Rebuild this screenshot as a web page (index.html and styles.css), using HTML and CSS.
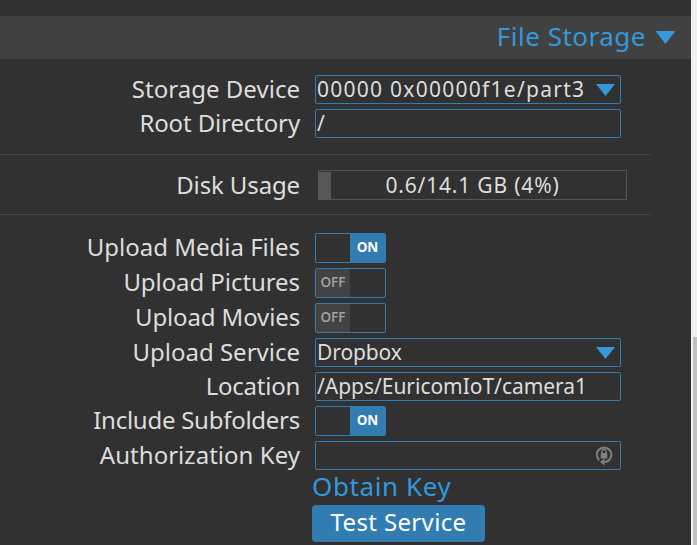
FILE: index.html
```html
<!DOCTYPE html>
<html lang="en">
<head>
<meta charset="utf-8">
<title>Settings</title>
<link rel="stylesheet" href="styles.css">
</head>
<body>
<div class="app">
  <main class="settings">
    <header class="section-title"><span>File Storage</span><svg class="arrow" width="21" height="13" viewBox="0 0 21 13"><path d="M.5 0h20L10.500 13z"/></svg></header>
    <section class="group storage">
      <div class="row"><label class="sp0">Storage Device</label><div class="field"><span class="v-device">00000 0x00000f1e/part3</span><svg class="caret" width="19" height="12" viewBox="0 0 19 12"><path d="M0 0h19L9.500 12z"/></svg></div></div>
      <div class="row"><label class="sp2">Root Directory</label><div class="field"><span>/</span></div></div>
    </section>
    <section class="group usage">
      <div class="row"><label class="sp2">Disk Usage</label><div class="progress"><div class="bar"></div><span>0.6/14.1 GB (4%)</span></div></div>
    </section>
    <section class="group upload">
      <div class="row"><label>Upload Media Files</label><div class="toggle on"><span>ON</span></div></div>
      <div class="row"><label class="sp1">Upload Pictures</label><div class="toggle"><span>OFF</span></div></div>
      <div class="row"><label class="sp2">Upload Movies</label><div class="toggle"><span>OFF</span></div></div>
      <div class="row"><label>Upload Service</label><div class="field"><span class="v-service">Dropbox</span><svg class="caret" width="19" height="12" viewBox="0 0 19 12"><path d="M0 0h19L9.500 12z"/></svg></div></div>
      <div class="row"><label class="sp3">Location</label><div class="field"><span class="v-location">/Apps/EuricomIoT/camera1</span></div></div>
      <div class="row"><label class="sp3">Include Subfolders</label><div class="toggle on"><span>ON</span></div></div>
      <div class="row"><label class="sp0">Authorization Key</label><div class="field">
        <svg class="key-icon" width="18" height="21" viewBox="0 0 18 21"><path class="ring" d="M4.200 15.200A7.300 7.300 0 1 1 14 15.200Q12.500 16.800 9.500 17"/><path d="M9.500 13.500v7L5 17zM5.800 8h6.500v5.500H5.800z"/><path class="shackle" d="M7 8.500V6.500a2 2 0 0 1 4 0v2"/></svg>
      </div></div>
    </section>
    <div class="actions">
      <a class="obtain">Obtain Key</a>
      <div class="button">Test Service</div>
    </div>
  </main>
  <aside class="scrollbar"><div class="thumb"></div></aside>
</div>
</body>
</html>
```
FILE: styles.css
```css
* { box-sizing: border-box; }
body {
  margin: 0;
  background: #313131;
  color: #dddddd;
  font-family: "Noto Sans", sans-serif;
  overflow: hidden;
}
.app { display: flex; height: 545px; }
.settings { width: 691px; padding-top: 16px; }
.section-title {
  display: flex;
  align-items: center;
  justify-content: flex-end;
  gap: 9px;
  height: 43px;
  padding-right: 15px;
  background: #414141;
  color: #3498db;
  font-size: 26px;
  letter-spacing: 0.5px;
  line-height: 43px;
}
.section-title span { padding-bottom: 2px; }
svg { flex: none; fill: #3498db; }
.group {
  display: grid;
  gap: 5px;
  width: 651px;
}
.storage { padding: 16px 0; border-bottom: 1px solid #434343; }
.usage { padding: 15px 0 14px; border-bottom: 1px solid #434343; }
.upload { padding-top: 18px; }
.row {
  display: grid;
  grid-template-columns: 300px 1fr;
  column-gap: 15px;
  align-items: center;
}
label {
  height: 28px;
  margin-top: -2px;
  font-size: 24px;
  line-height: 28px;
  text-align: right;
  white-space: nowrap;
}
.usage label { margin-top: 0; }
.sp0 { letter-spacing: 0.03px; }
.sp1 { letter-spacing: -0.07px; }
.sp2 { letter-spacing: -0.13px; }
.sp3 { letter-spacing: -0.26px; }
.field {
  display: flex;
  align-items: center;
  justify-content: space-between;
  width: 306px;
  height: 29px;
  padding: 0 5px 0 1px;
  border: 1px solid #317cb0;
  border-radius: 2px;
  font-size: 21px;
  line-height: 24px;
  white-space: nowrap;
}
.field span { padding-bottom: 2px; }
.v-device { letter-spacing: 1.26px; }
.v-service { letter-spacing: -0.1px; }
.v-location { letter-spacing: -0.03px; }
.key-icon { margin: 0 2px 0 auto; fill: #808080; }
.key-icon path.ring { fill: none; stroke: #808080; stroke-width: 2; }
.key-icon path.shackle { fill: none; stroke: #808080; stroke-width: 1.3; }
.progress {
  display: grid;
  width: 309px;
  height: 30px;
  margin-left: 3px;
  border: 1px solid #565656;
}
.progress > * { grid-area: 1 / 1; }
.bar { width: 12px; margin-top: 1px; background: #565656; }
.progress span {
  height: 28px;
  font-size: 21px;
  letter-spacing: 0.82px;
  line-height: 28px;
  text-align: center;
}
.toggle {
  display: flex;
  width: 71px;
  height: 30px;
  border: 1px solid #317cb0;
  border-radius: 2px;
}
.toggle span {
  width: 34px;
  background: #434343;
  color: #a5a5a5;
  font: 600 13.500px/26px "Open Sans", sans-serif;
  text-align: center;
}
.toggle.on { justify-content: flex-end; }
.toggle.on span { width: 35px; background: #317cb0; color: #fff; font-weight: 700; }
.actions {
  display: flex;
  flex-direction: column;
  align-items: flex-start;
  padding-left: 312px;
}
.obtain {
  height: 35px;
  color: #3498db;
  font-size: 26px;
  letter-spacing: 0.6px;
  line-height: 32px;
}
.button {
  width: 173px;
  height: 37px;
  border-radius: 4px;
  background: #317cb0;
  color: #fff;
  font-size: 24px;
  letter-spacing: 0.35px;
  line-height: 34px;
  text-align: center;
}
.scrollbar { width: 6px; padding: 337px 0 0 2px; background: #f1f1f1; }
.thumb { height: 208px; background: #c1c1c1; }
```
